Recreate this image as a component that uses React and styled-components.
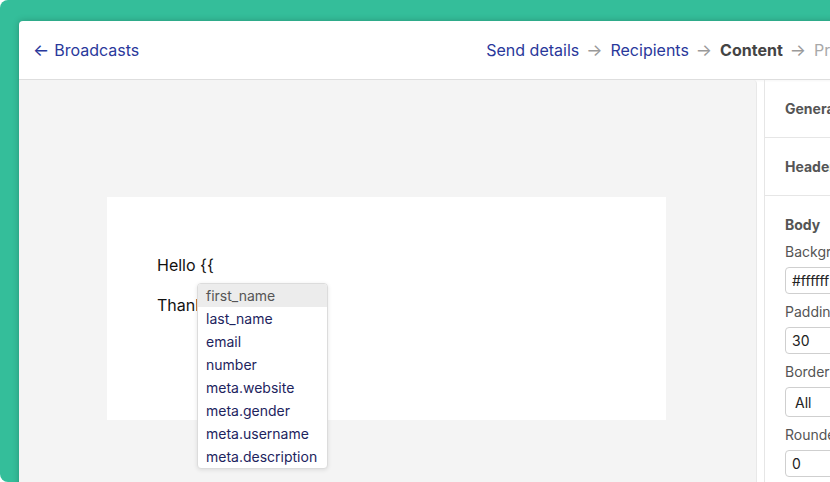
import React from 'react';
import styled, { createGlobalStyle } from 'styled-components';

const Global = createGlobalStyle`
  html, body {
    margin: 0;
    padding: 0;
    background: #ffffff;
  }
  * {
    box-sizing: border-box;
  }
`;

const Frame = styled.div`
  width: 830px;
  height: 482px;
  overflow: hidden;
  background: #34be9a;
  border-radius: 8px 0 0 8px;
  padding: 21px 0 0 19px;
  font-family: Inter, "Liberation Sans", sans-serif;
`;

const Window = styled.div`
  width: 869px;
  height: 520px;
  background: #ffffff;
  border-radius: 4px 0 0 0;
  box-shadow: 0 0 7px rgba(0, 0, 0, 0.22);
  display: flex;
  flex-direction: column;
`;

const Header = styled.div`
  height: 59px;
  flex-shrink: 0;
  display: flex;
  align-items: center;
  justify-content: space-between;
  padding: 0 14px;
  border-bottom: 1px solid #dedede;
  box-shadow: 0 1px 2px rgba(0, 0, 0, 0.04);
  font-size: 16px;
`;

const BackLink = styled.a`
  color: #29389b;
  text-decoration: none;
  display: flex;
  align-items: center;
  gap: 5px;
`;

const BackArrow = styled.span`
  font-size: 17px;
`;

const Steps = styled.nav`
  display: flex;
  align-items: center;
`;

const Step = styled.span`
  color: ${p => (p.$state === 'current' ? '#444444' : p.$state === 'todo' ? '#a8a8a8' : '#29389b')};
  font-weight: ${p => (p.$state === 'current' ? 700 : 400)};
`;

const StepArrow = styled.span`
  color: #9a9a9a;
  margin: 0 8px 0 7px;
  font-size: 17px;
`;

const Main = styled.div`
  flex: 1;
  display: flex;
  min-height: 0;
`;

const Canvas = styled.div`
  width: 738px;
  flex-shrink: 0;
  background: #f4f4f4;
  border-right: 1px solid #e8e8e8;
  border-top-right-radius: 4px;
  display: flex;
  justify-content: flex-start;
  align-items: flex-start;
  padding: 117px 0 0 88px;
`;

const EmailCard = styled.div`
  position: relative;
  width: 559px;
  height: 223px;
  background: #ffffff;
  padding: 56px 50px 0;
  color: #111111;
  font-size: 16px;
  line-height: 24px;
`;

const Paragraph = styled.p`
  margin: 0 0 16px;
`;

const Suggestions = styled.ul`
  position: absolute;
  left: 90px;
  top: 86px;
  width: 131px;
  margin: 0;
  padding: 0;
  list-style: none;
  background: #ffffff;
  border: 1px solid #dcdcdc;
  border-radius: 4px;
  box-shadow: 0 1px 4px rgba(0, 0, 0, 0.1);
  overflow: hidden;
`;

const Suggestion = styled.li`
  height: 23px;
  line-height: 23px;
  padding: 0 8px;
  font-size: 14px;
  color: ${p => (p.$active ? '#555555' : '#1d245e')};
  background: ${p => (p.$active ? '#ececec' : 'transparent')};
  white-space: nowrap;
`;

const Sidebar = styled.aside`
  flex: 1;
  margin-left: 7px;
  border-left: 1px solid #e6e6e6;
  font-size: 14px;
  color: #555555;
`;

const Section = styled.div`
  height: 58px;
  display: flex;
  align-items: center;
  padding-left: 20px;
  border-bottom: 1px solid #e6e6e6;
  font-weight: 700;
  white-space: nowrap;
`;

const BodySection = styled.div`
  padding: 19px 0 0 20px;
  display: flex;
  flex-direction: column;
`;

const SectionTitle = styled.div`
  font-weight: 700;
  line-height: 20px;
  margin-bottom: 7px;
`;

const Field = styled.div`
  display: flex;
  flex-direction: column;
  margin-bottom: 8px;
`;

const Label = styled.label`
  line-height: 20px;
  margin-bottom: 5px;
  white-space: nowrap;
`;

const Input = styled.div`
  height: ${p => (p.$select ? 30 : 27)}px;
  width: 200px;
  border: 1px solid #cfcfcf;
  border-radius: 4px;
  display: flex;
  align-items: center;
  padding-left: ${p => (p.$select ? 9 : 6)}px;
  color: #222222;
  font-size: 14px;
`;

const fields = [
  { label: 'Background', value: '#ffffff' },
  { label: 'Padding', value: '30' },
  { label: 'Border', value: 'All', select: true },
  { label: 'Rounded', value: '0' },
];

const tags = [
  'first_name',
  'last_name',
  'email',
  'number',
  'meta.website',
  'meta.gender',
  'meta.username',
  'meta.description',
];

const App = () => {
  return (
    <>
      <Global />
      <Frame>
        <Window>
          <Header>
            <BackLink href="#">
              <BackArrow>←</BackArrow>
              <span>Broadcasts</span>
            </BackLink>
            <Steps>
              <Step>Send details</Step>
              <StepArrow>→</StepArrow>
              <Step>Recipients</Step>
              <StepArrow>→</StepArrow>
              <Step $state="current">Content</Step>
              <StepArrow>→</StepArrow>
              <Step $state="todo">Preview</Step>
            </Steps>
          </Header>
          <Main>
            <Canvas>
              <EmailCard>
                <Paragraph>Hello {'{{'}</Paragraph>
                <Paragraph>Thanks</Paragraph>
                <Suggestions>
                  {tags.map((t, i) => (
                    <Suggestion key={t} $active={i === 0}>{t}</Suggestion>
                  ))}
                </Suggestions>
              </EmailCard>
            </Canvas>
            <Sidebar>
              <Section>General</Section>
              <Section>Header</Section>
              <BodySection>
                <SectionTitle>Body</SectionTitle>
                {fields.map(f => (
                  <Field key={f.label}>
                    <Label>{f.label}</Label>
                    <Input $select={f.select}>{f.value}</Input>
                  </Field>
                ))}
              </BodySection>
            </Sidebar>
          </Main>
        </Window>
      </Frame>
    </>
  );
};

export default App;
